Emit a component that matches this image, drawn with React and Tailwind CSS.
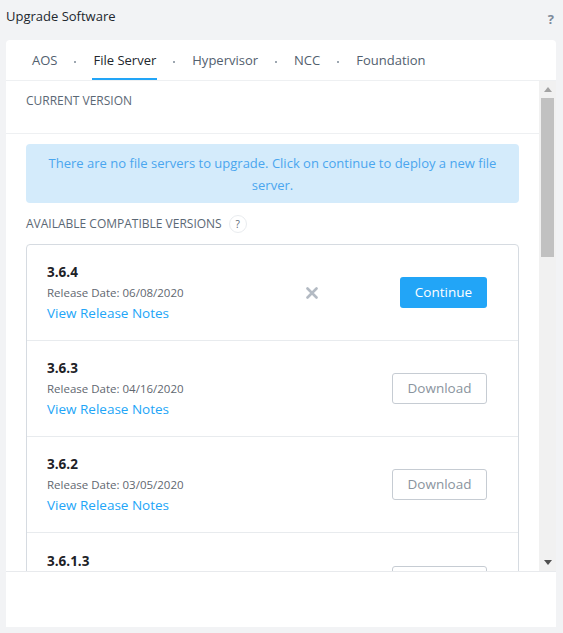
import { useState } from 'react';

const tabs = ['AOS', 'File Server', 'Hypervisor', 'NCC', 'Foundation'];

const versions = [
  { version: '3.6.4', date: '06/08/2020', action: 'continue' },
  { version: '3.6.3', date: '04/16/2020', action: 'download' },
  { version: '3.6.2', date: '03/05/2020', action: 'download' },
  { version: '3.6.1.3', date: '02/11/2020', action: 'download' },
];

function VersionRow({ item, last }) {
  return (
    <div
      className={`h-[96px] shrink-0 flex items-center pl-[20px] pr-[31px] ${
        last ? '' : 'border-b border-[#e8ebee]'
      }`}
    >
      <div className="flex-1 flex flex-col">
        <div className="text-[13.5px] leading-[20px] font-bold text-[#1d2227]">{item.version}</div>
        <div className="text-[11.5px] leading-[21px] text-[#5f6770]">Release Date: {item.date}</div>
        <a className="text-[13.5px] leading-[20px] text-[#22a5f7] cursor-pointer">View Release Notes</a>
      </div>
      {item.action === 'continue' ? (
        <>
          <svg width="12" height="12" viewBox="0 0 12 12" className="mr-[82px]">
            <path d="M1.5 1.5 L10.5 10.5 M10.5 1.5 L1.5 10.5" stroke="#b3bac3" strokeWidth="2.6" strokeLinecap="round" />
          </svg>
          <button className="w-[87px] h-[31px] rounded-[3px] bg-[#22a5f7] text-white text-[13.5px]">Continue</button>
        </>
      ) : (
        <button className="w-[95px] h-[31px] rounded-[3px] border border-[#c6ccd3] bg-white text-[#8a949e] text-[13.5px]">
          Download
        </button>
      )}
    </div>
  );
}

export default function App() {
  const [active, setActive] = useState('File Server');

  return (
    <div
      className="w-[563px] h-[633px] bg-[#f2f3f5] flex flex-col overflow-hidden"
      style={{ fontFamily: '"Open Sans", "Liberation Sans", sans-serif' }}
    >
      <div className="h-[40px] shrink-0 flex justify-between px-[6px]">
        <div className="pt-[6px] text-[13px] leading-[20px] text-[#22272e]">Upgrade Software</div>
        <div className="pt-[9px] pr-[3px] text-[13px] leading-[20px] font-bold text-[#7c8a9a]">?</div>
      </div>

      <div className="mx-[6px] w-[550px] h-[587px] bg-white rounded-t-[4px] flex flex-col">
        <div className="h-[41px] shrink-0 flex items-stretch pl-[25px] border-b border-[#eef0f2]">
          {tabs.map((tab, i) => (
            <div key={tab} className="flex items-stretch">
              {i > 0 && (
                <div className="w-[34px] pt-[4px] flex items-center justify-center">
                  <span className="w-[2px] h-[2px] rounded-full bg-[#7d8a97]" />
                </div>
              )}
              <button
                onClick={() => setActive(tab)}
                className={`px-[1px] pt-[4px] text-[13px] flex items-center border-b-[2px] ${
                  active === tab ? 'border-[#22a5f7] text-[#22272e]' : 'border-transparent text-[#52606e]'
                }`}
              >
                {tab}
              </button>
            </div>
          ))}
        </div>

        <div className="flex-1 flex min-h-0">
          <div className="flex-1 flex flex-col overflow-hidden">
            <div className="h-[53px] shrink-0 border-b border-[#eef0f2] px-[20px] pt-[12px] text-[12px] leading-[16px] text-[#5b6875] uppercase">
              Current Version
            </div>
            <div className="pl-[20px] pr-[20px] pt-[10px]">
              <div className="h-[59px] rounded-[4px] bg-[#d4ebfb] flex items-center justify-center px-[16px] text-center text-[13px] leading-[22px] text-[#4aa6ef]">
                There are no file servers to upgrade. Click on continue to deploy a new file server.
              </div>
              <div className="flex items-center gap-[7px] mt-[11px] mb-[10px] h-[20px]">
                <span className="text-[12px] text-[#5b6875] uppercase">Available Compatible Versions</span>
                <span className="w-[18px] h-[18px] rounded-full border border-[#e9ecef] flex items-center justify-center text-[10px] text-[#5b6875]">
                  ?
                </span>
              </div>
              <div className="border border-[#d6dbe1] rounded-[4px] flex flex-col">
                {versions.map((v, i) => (
                  <VersionRow key={v.version} item={v} last={i === versions.length - 1} />
                ))}
              </div>
            </div>
          </div>
          <div className="w-[17px] shrink-0 bg-[#f1f1f1] flex flex-col items-center">
            <div className="h-[17px] flex items-center justify-center">
              <svg width="8" height="5" viewBox="0 0 8 5">
                <path d="M0 5 L4 0 L8 5 Z" fill="#a3a3a3" />
              </svg>
            </div>
            <div className="w-[13px] h-[159px] bg-[#c1c1c1]" />
            <div className="flex-1" />
            <div className="h-[17px] flex items-center justify-center">
              <svg width="8" height="5" viewBox="0 0 8 5">
                <path d="M0 0 L8 0 L4 5 Z" fill="#505050" />
              </svg>
            </div>
          </div>
        </div>

        <div className="h-[56px] shrink-0 border-t border-[#e8eaed]" />
      </div>
    </div>
  );
}
